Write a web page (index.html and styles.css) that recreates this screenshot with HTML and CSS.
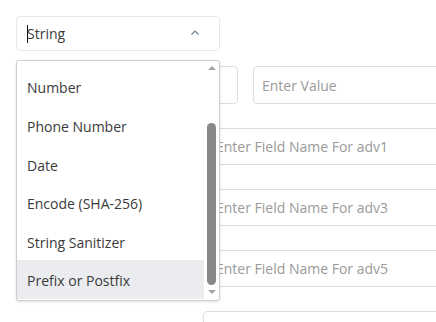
FILE: index.html
```html
<!DOCTYPE html>
<html lang="en">
<head>
    <meta charset="UTF-8">
    <meta name="viewport" content="width=device-width, initial-scale=1.0">
    <title>Field Type</title>
    <link rel="stylesheet" href="styles.css">
</head>
<body>
  <div class="page">
    <!-- Type picker with open menu -->
    <div class="type-field">
      <div class="type-select">
        <span class="type-value"><span class="caret"></span>String</span>
        <svg class="chevron" width="8" height="5" viewBox="0 0 8 5">
          <path d="M0.5 4.5 L4 1 L7.5 4.5" fill="none" stroke="#6b7a90" stroke-width="1.1"/>
        </svg>
      </div>

      <div class="dropdown">
        <ul class="options">
          <li>Number</li>
          <li>Phone Number</li>
          <li>Date</li>
          <li>Encode (SHA-256)</li>
          <li>String Sanitizer</li>
          <li class="active">Prefix or Postfix</li>
        </ul>
        <div class="scrollbar">
          <span class="arrow up"></span>
          <div class="track"><div class="thumb"></div></div>
          <span class="arrow down"></span>
        </div>
      </div>
    </div>

    <div class="rule-row">
      <input class="input small" type="text">
      <input class="input value" type="text" placeholder="Enter Value">
    </div>

    <div class="field-list">
      <input class="input field" type="text" placeholder="Enter Field Name For adv1">
      <input class="input field" type="text" placeholder="Enter Field Name For adv3">
      <input class="input field" type="text" placeholder="Enter Field Name For adv5">
      <input class="input field" type="text">
    </div>
  </div>
</body>
</html>
```

FILE: styles.css
```css
:root {
  --clr-text: #3a3a3a;
  --clr-muted: #9a9a9a;
  --clr-border: #dedede;
  --clr-select-border: #e3e7ee;
  --clr-hover: #ebecf0;
}
* { margin: 0; padding: 0; box-sizing: border-box; }
body {
  font-family: 'Open Sans', sans-serif;
  font-size: 14px;
  color: var(--clr-text);
  background: #fff;
  overflow: hidden;
}
.page {
  width: 436px;
  height: 322px;
  overflow: hidden;
  padding: 16px 0 0 16px;
}
.type-field {
  position: relative;
  width: 204px;
}
.type-select {
  height: 35px;
  border: 1px solid var(--clr-select-border);
  border-radius: 4px;
  display: flex;
  align-items: center;
  justify-content: space-between;
  padding: 0 20px 0 10px;
}
.type-value {
  display: flex;
  align-items: center;
}
.caret {
  width: 1px;
  height: 18px;
  background: #111;
  margin-right: -1px;
}
.chevron { display: block; margin-top: -2px; }

/* open menu */
.dropdown {
  position: absolute;
  top: 44px;
  left: 0;
  width: 204px;
  height: 241px;
  background: #fff;
  border: 1px solid #cfcfcf;
  border-radius: 3px;
  box-shadow: 0 1px 3px rgba(0,0,0,0.12);
  display: flex;
  overflow: hidden;
  z-index: 10;
}
.options {
  list-style: none;
  flex: 1;
  padding-top: 6.4px;
}
.options li {
  height: 38.6px;
  line-height: 41px;
  padding-left: 10px;
  white-space: nowrap;
}
.options li.active { background: var(--clr-hover); }
.scrollbar {
  width: 15px;
  display: flex;
  flex-direction: column;
  align-items: center;
  padding: 5px 0 6px;
}
.arrow {
  width: 0;
  height: 0;
  border-left: 4px solid transparent;
  border-right: 4px solid transparent;
}
.arrow.up { border-bottom: 4px solid #a3a3a3; }
.arrow.down { border-top: 4px solid #a3a3a3; }
.track {
  flex: 1;
  width: 9px;
  padding: 53px 0 5px;
  display: flex;
}
.thumb {
  flex: 1;
  background: #888;
  border-radius: 5px;
}

/* form behind the menu */
.input {
  display: block;
  height: 38px;
  border: 1px solid var(--clr-border);
  border-radius: 4px;
  padding: 0 8px;
  font: inherit;
  color: var(--clr-text);
  background: #fff;
  outline: none;
}
.input::placeholder { color: var(--clr-muted); }
.rule-row {
  display: flex;
  gap: 15px;
  margin-top: 15px;
  padding-left: 104px;
}
.input.small { width: 118px; }
.input.value { width: 260px; flex-shrink: 0; }
.field-list {
  display: flex;
  flex-direction: column;
  gap: 24px;
  margin-top: 24px;
  padding-left: 187px;
}
.input.field {
  width: 300px;
  height: 37px;
  padding: 0 12px;
  flex-shrink: 0;
}
```
